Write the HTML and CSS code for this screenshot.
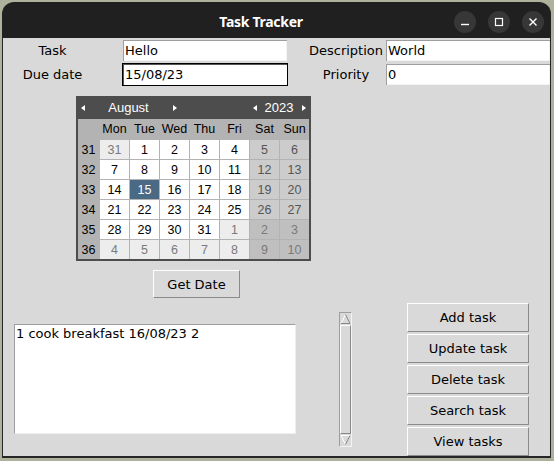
FILE: index.html
```html
<!DOCTYPE html>
<html>
<head>
<meta charset="utf-8">
<link rel="stylesheet" href="styles.css">
</head>
<body>
<div class="window">
  <div class="titlebar">
    <span class="title">Task Tracker</span>
    <div class="controls">
      <div class="ctl"><svg width="10" height="10" viewBox="0 0 10 10"><line x1="1" y1="7.5" x2="9" y2="7.5" stroke="#fff" stroke-width="1.4"/></svg></div>
      <div class="ctl"><svg width="10" height="10" viewBox="0 0 10 10"><rect x="1.5" y="1.5" width="7" height="7" fill="none" stroke="#fff" stroke-width="1.2"/></svg></div>
      <div class="ctl"><svg width="10" height="10" viewBox="0 0 10 10"><path d="M1.5 1.5 L8.5 8.5 M8.5 1.5 L1.5 8.5" stroke="#fff" stroke-width="1.4"/></svg></div>
    </div>
  </div>
  <div class="content">
    <div class="form">
      <span class="lbl lbl-first">Task</span>
      <div class="entry">Hello</div>
      <span class="lbl">Description</span>
      <div class="entry">World</div>
      <span class="lbl lbl-first">Due date</span>
      <div class="entry focus">15/08/23</div>
      <span class="lbl">Priority</span>
      <div class="entry">0</div>
    </div>

    <div class="cal">
      <div class="cal-head">
        <div class="nav">
          <span class="arr"><i class="tri-l"></i></span>
          <span class="month">August</span>
          <span class="arr"><i class="tri-r"></i></span>
        </div>
        <div class="nav">
          <span class="arr"><i class="tri-l"></i></span>
          <span class="year">2023</span>
          <span class="arr"><i class="tri-r"></i></span>
        </div>
      </div>
      <div class="cal-grid">
        <span class="hd"></span><span class="hd">Mon</span><span class="hd">Tue</span><span class="hd">Wed</span><span class="hd">Thu</span><span class="hd">Fri</span><span class="hd">Sat</span><span class="hd">Sun</span>

        <span class="wk">31</span><span class="d om">31</span><span class="d">1</span><span class="d">2</span><span class="d">3</span><span class="d">4</span><span class="d we">5</span><span class="d we">6</span>
        <span class="wk">32</span><span class="d">7</span><span class="d">8</span><span class="d">9</span><span class="d">10</span><span class="d">11</span><span class="d we">12</span><span class="d we">13</span>
        <span class="wk">33</span><span class="d">14</span><span class="d sel">15</span><span class="d">16</span><span class="d">17</span><span class="d">18</span><span class="d we">19</span><span class="d we">20</span>
        <span class="wk">34</span><span class="d">21</span><span class="d">22</span><span class="d">23</span><span class="d">24</span><span class="d">25</span><span class="d we">26</span><span class="d we">27</span>
        <span class="wk">35</span><span class="d">28</span><span class="d">29</span><span class="d">30</span><span class="d">31</span><span class="d om">1</span><span class="d omwe">2</span><span class="d omwe">3</span>
        <span class="wk">36</span><span class="d om">4</span><span class="d om">5</span><span class="d om">6</span><span class="d om">7</span><span class="d om">8</span><span class="d omwe">9</span><span class="d omwe">10</span>
      </div>
    </div>

    <button class="btn getdate">Get Date</button>

    <div class="bottom">
      <div class="listbox"><div class="item">1 cook breakfast 16/08/23 2</div></div>
      <div class="sb">
        <div class="sb-arrow"><svg width="11" height="12" viewBox="0 0 11 12"><polygon points="5.5,1.5 10,10.5 1,10.5" fill="#d9d9d9"/><path d="M1 10.5 L5.5 1.5" stroke="#ffffff" stroke-width="1"/><path d="M5.5 1.5 L10 10.5 L1 10.5" fill="none" stroke="#8a8a8a" stroke-width="1"/></svg></div>
        <div class="sb-thumb"></div>
        <div class="sb-arrow"><svg width="11" height="12" viewBox="0 0 11 12"><polygon points="1,1.5 10,1.5 5.5,10.5" fill="#d9d9d9"/><path d="M1 1.5 L10 1.5 M1 1.5 L5.5 10.5" fill="none" stroke="#ffffff" stroke-width="1"/><path d="M10 1.5 L5.5 10.5" stroke="#8a8a8a" stroke-width="1"/></svg></div>
      </div>
      <div class="actions">
        <button class="btn act">Add task</button>
        <button class="btn act">Update task</button>
        <button class="btn act">Delete task</button>
        <button class="btn act">Search task</button>
        <button class="btn act">View tasks</button>
      </div>
    </div>
  </div>
</div>
</body>
</html>
```
FILE: styles.css
```css
html, body {
  margin: 0;
  padding: 0;
}
body {
  width: 554px;
  height: 461px;
  overflow: hidden;
  background: #aeb19b;
  font-family: "DejaVu Sans", sans-serif;
  font-size: 13px;
  color: #000;
}
.window {
  margin: 2px 0 0 2px;
  width: 549px;
  height: 456px;
  display: flex;
  flex-direction: column;
}
.titlebar {
  height: 36px;
  flex: none;
  box-sizing: border-box;
  padding-top: 3px;
  background: #202020;
  border-radius: 12px 12px 0 0;
  display: flex;
  align-items: center;
}
.title {
  flex: 1;
  text-align: center;
  padding-left: 66px;
  color: #fff;
  font-family: "Noto Sans", sans-serif;
  font-weight: 700;
  font-size: 14px;
  letter-spacing: -0.3px;
}
.controls {
  display: flex;
  gap: 12px;
  margin-right: 7px;
}
.ctl {
  width: 22px;
  height: 22px;
  border-radius: 50%;
  background: #373737;
  display: flex;
  align-items: center;
  justify-content: center;
}
.ctl svg { display: block; }
.content {
  flex: 1;
  background: #d9d9d9;
  border-left: 1px solid #262626;
  border-right: 1px solid #262626;
  border-bottom: 2px solid #262626;
  overflow: hidden;
}
.form {
  margin-top: 1px;
  display: grid;
  grid-template-columns: 119px 185px 78px 166px;
  grid-auto-rows: 23px;
  row-gap: 1px;
  align-items: center;
}
.lbl {
  text-align: center;
  white-space: nowrap;
}
.lbl-first { padding-right: 20px; }
.entry {
  box-sizing: border-box;
  width: 166px;
  height: 23px;
  border: 1px solid #d9d9d9;
  background: #fff;
  background-clip: padding-box;
  box-shadow: inset 1px 1px 0 #9e9e9e, inset -1px -1px 0 #f4f4f4;
  padding: 0 2px;
  line-height: 21px;
  white-space: nowrap;
}
.entry.focus {
  border-color: #000;
  box-shadow: inset 1px 1px 0 #555, inset -1px -1px 0 #fff;
}

.cal {
  margin: 10px 0 0 73px;
  width: 235px;
  box-sizing: border-box;
  background: #4d4d4d;
  padding: 0 2px 2px;
  font-family: "Liberation Sans", Arial, sans-serif;
  font-size: 12.5px;
}
.cal-head {
  height: 23px;
  display: flex;
  justify-content: space-between;
  align-items: center;
  color: #fff;
  padding-right: 1px;
}
.nav {
  display: flex;
  align-items: center;
}
.arr {
  width: 9px;
  height: 23px;
  display: flex;
  align-items: center;
  justify-content: center;
}
.tri-l, .tri-r {
  display: block;
  width: 0;
  height: 0;
  border-top: 3px solid transparent;
  border-bottom: 3px solid transparent;
}
.tri-l { border-right: 4px solid #fff; }
.tri-r { border-left: 4px solid #fff; }
.month {
  width: 83px;
  text-align: center;
  font-size: 13px;
}
.year {
  width: 40px;
  text-align: center;
  font-size: 13px;
}
.cal-grid {
  display: grid;
  grid-template-columns: 21px repeat(7, 29px);
  grid-template-rows: 20px repeat(6, 19px);
  gap: 1px;
  background: #b3b3b3;
}
.cal-grid span {
  display: flex;
  align-items: center;
  justify-content: center;
}
.hd { background: #b3b3b3; color: #000; }
.wk { background: #b3b3b3; color: #000; }
.d { background: #fff; color: #000; }
.d.we { background: #cccccc; color: #555; }
.d.om { background: #ededed; color: #7a7a7a; }
.d.omwe { background: #bfbfbf; color: #7a7a7a; }
.d.sel { background: #4a6984; color: #fff; }

.btn {
  display: block;
  box-sizing: border-box;
  margin: 0;
  padding: 0;
  background: #d9d9d9;
  border: 1px solid;
  border-color: #ffffff #8a8a8a #8a8a8a #ffffff;
  font-family: "DejaVu Sans", sans-serif;
  font-size: 13px;
  color: #000;
  text-align: center;
}
.getdate {
  margin: 9px 0 0 150px;
  width: 87px;
  height: 28px;
}
.bottom {
  margin-top: 5px;
  display: flex;
  align-items: flex-start;
}
.listbox {
  margin: 21px 0 0 11px;
  width: 282px;
  height: 110px;
  box-sizing: border-box;
  background: #fff;
  border: 1px solid;
  border-color: #9e9e9e #eeeeee #eeeeee #9e9e9e;
  padding: 1px 1px;
  line-height: 15px;
  white-space: nowrap;
}
.sb {
  margin: 9px 0 0 43px;
  width: 13px;
  height: 135px;
  box-sizing: border-box;
  border: 1px solid;
  border-color: #9e9e9e #f4f4f4 #f4f4f4 #9e9e9e;
  display: flex;
  flex-direction: column;
}
.sb-arrow {
  height: 12px;
  flex: none;
}
.sb-arrow svg { display: block; }
.sb-thumb {
  flex: 1;
  box-sizing: border-box;
  border: 1px solid;
  border-color: #ffffff #8a8a8a #8a8a8a #ffffff;
}
.actions {
  margin-left: 55px;
  display: flex;
  flex-direction: column;
  gap: 2px;
}
.act {
  width: 122px;
  height: 29px;
}
```
